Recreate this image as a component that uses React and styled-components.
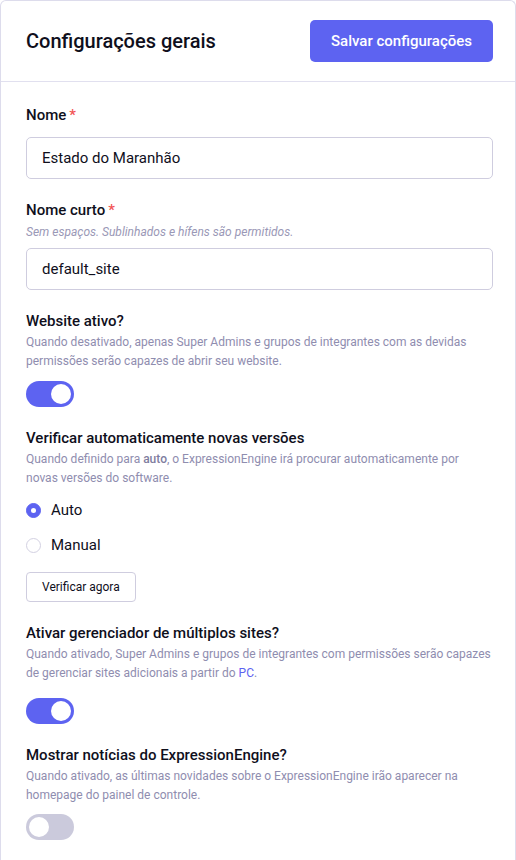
import React, { useState } from 'react';
import styled, { createGlobalStyle } from 'styled-components';

const PRIMARY = '#5d63f1';

const GlobalStyle = createGlobalStyle`
  * { box-sizing: border-box; }
  body {
    margin: 0;
    background: #fff;
    font-family: Roboto, 'Liberation Sans', Arial, sans-serif;
    color: #0f0f1c;
  }
`;

const App = () => {
  const [active, setActive] = useState(true);
  const [msm, setMsm] = useState(true);
  const [news, setNews] = useState(false);
  const [check, setCheck] = useState('auto');

  return (
    <>
      <GlobalStyle />
      <Panel>
        <Header>
          <Title>Configurações gerais</Title>
          <PrimaryButton>Salvar configurações</PrimaryButton>
        </Header>
        <Body>
          <Field>
            <Label>
              Nome<Required>*</Required>
            </Label>
            <Input defaultValue="Estado do Maranhão" $top={12} />
          </Field>

          <Field>
            <Label>
              Nome curto<Required>*</Required>
            </Label>
            <Hint>Sem espaços. Sublinhados e hífens são permitidos.</Hint>
            <Input defaultValue="default_site" $top={7} />
          </Field>

          <Field>
            <Label>Website ativo?</Label>
            <Desc>
              Quando desativado, apenas Super Admins e grupos de integrantes com
              as devidas permissões serão capazes de abrir seu website.
            </Desc>
            <Toggle $on={active} $top={10} onClick={() => setActive(!active)}>
              <Knob $on={active} />
            </Toggle>
          </Field>

          <Field>
            <Label>Verificar automaticamente novas versões</Label>
            <Desc>
              Quando definido para <b>auto</b>, o ExpressionEngine irá procurar
              automaticamente por novas versões do software.
            </Desc>
            <RadioList>
              <RadioRow onClick={() => setCheck('auto')}>
                <Radio $checked={check === 'auto'} />
                Auto
              </RadioRow>
              <RadioRow onClick={() => setCheck('manual')}>
                <Radio $checked={check === 'manual'} />
                Manual
              </RadioRow>
            </RadioList>
            <SmallButton>Verificar agora</SmallButton>
          </Field>

          <Field>
            <Label>Ativar gerenciador de múltiplos sites?</Label>
            <Desc>
              Quando ativado, Super Admins e grupos de integrantes com
              permissões serão capazes de gerenciar sites adicionais a partir
              do <Link href="#">PC</Link>.
            </Desc>
            <Toggle $on={msm} $top={15} onClick={() => setMsm(!msm)}>
              <Knob $on={msm} />
            </Toggle>
          </Field>

          <Field>
            <Label>Mostrar notícias do ExpressionEngine?</Label>
            <Desc>
              Quando ativado, as últimas novidades sobre o ExpressionEngine irão
              aparecer na homepage do painel de controle.
            </Desc>
            <Toggle $on={news} $top={9} onClick={() => setNews(!news)}>
              <Knob $on={news} />
            </Toggle>
          </Field>
        </Body>
      </Panel>
    </>
  );
};

export default App;

const Panel = styled.div`
  width: 516px;
  min-height: 860px;
  background: #fff;
  border: 1px solid #dddcec;
  border-bottom: none;
  border-radius: 6px 6px 0 0;
`;

const Header = styled.div`
  display: flex;
  align-items: center;
  justify-content: space-between;
  padding: 19px 22px 19px 25px;
  border-bottom: 1px solid #e1e0ef;
`;

const Title = styled.h1`
  margin: 0;
  font-size: 20px;
  font-weight: 500;
  color: #0f0f1c;
`;

const PrimaryButton = styled.button`
  height: 42px;
  padding: 0 21px;
  border: none;
  border-radius: 5px;
  background: ${PRIMARY};
  color: #fff;
  font-family: inherit;
  font-size: 15px;
  font-weight: 500;
  cursor: pointer;
`;

const Body = styled.div`
  padding: 23px 22px 0 25px;
`;

const Field = styled.div`
  display: flex;
  flex-direction: column;
  align-items: flex-start;
  margin-bottom: 21px;
`;

const Label = styled.label`
  font-size: 15px;
  line-height: 20px;
  font-weight: 500;
  color: #0f0f1c;
`;

const Required = styled.span`
  color: #f25555;
  margin-left: 3px;
`;

const Hint = styled.p`
  margin: 3px 0 0;
  font-size: 12px;
  line-height: 18px;
  font-style: italic;
  color: #9a98b6;
`;

const Desc = styled.p`
  margin: 2px 0 0;
  font-size: 12px;
  line-height: 19px;
  color: #8f8daf;

  b {
    font-weight: 500;
    color: #7f7da0;
  }
`;

const Link = styled.a`
  color: ${PRIMARY};
  text-decoration: none;
`;

const Input = styled.input`
  width: 100%;
  height: 42px;
  margin-top: ${(p) => p.$top}px;
  padding: 0 15px;
  border: 1px solid #cfcddf;
  border-radius: 5px;
  font-family: inherit;
  font-size: 15px;
  color: #0f0f1c;
  outline: none;
`;

const Toggle = styled.div`
  width: 48px;
  height: 26px;
  margin-top: ${(p) => p.$top}px;
  padding: 3px;
  border-radius: 13px;
  background: ${(p) => (p.$on ? PRIMARY : '#cbcadc')};
  display: flex;
  justify-content: ${(p) => (p.$on ? 'flex-end' : 'flex-start')};
  cursor: pointer;
`;

const Knob = styled.span`
  width: 20px;
  height: 20px;
  border-radius: 50%;
  background: #fff;
`;

const RadioList = styled.div`
  display: flex;
  flex-direction: column;
  gap: 11px;
  margin-top: 10px;
`;

const RadioRow = styled.label`
  display: flex;
  align-items: center;
  gap: 10px;
  height: 24px;
  font-size: 15px;
  color: #0f0f1c;
  cursor: pointer;
`;

const Radio = styled.span`
  width: 15px;
  height: 15px;
  border-radius: 50%;
  background: ${(p) => (p.$checked ? PRIMARY : '#fff')};
  border: 1px solid ${(p) => (p.$checked ? PRIMARY : '#d3d1e2')};
  display: grid;
  place-items: center;

  &::after {
    content: '';
    width: 5px;
    height: 5px;
    border-radius: 50%;
    background: #fff;
    display: ${(p) => (p.$checked ? 'block' : 'none')};
  }
`;

const SmallButton = styled.button`
  margin-top: 15px;
  height: 30px;
  padding: 0 15px;
  border: 1px solid #cfcddf;
  border-radius: 4px;
  background: #fff;
  font-family: inherit;
  font-size: 12px;
  color: #0f0f1c;
  cursor: pointer;
`;
